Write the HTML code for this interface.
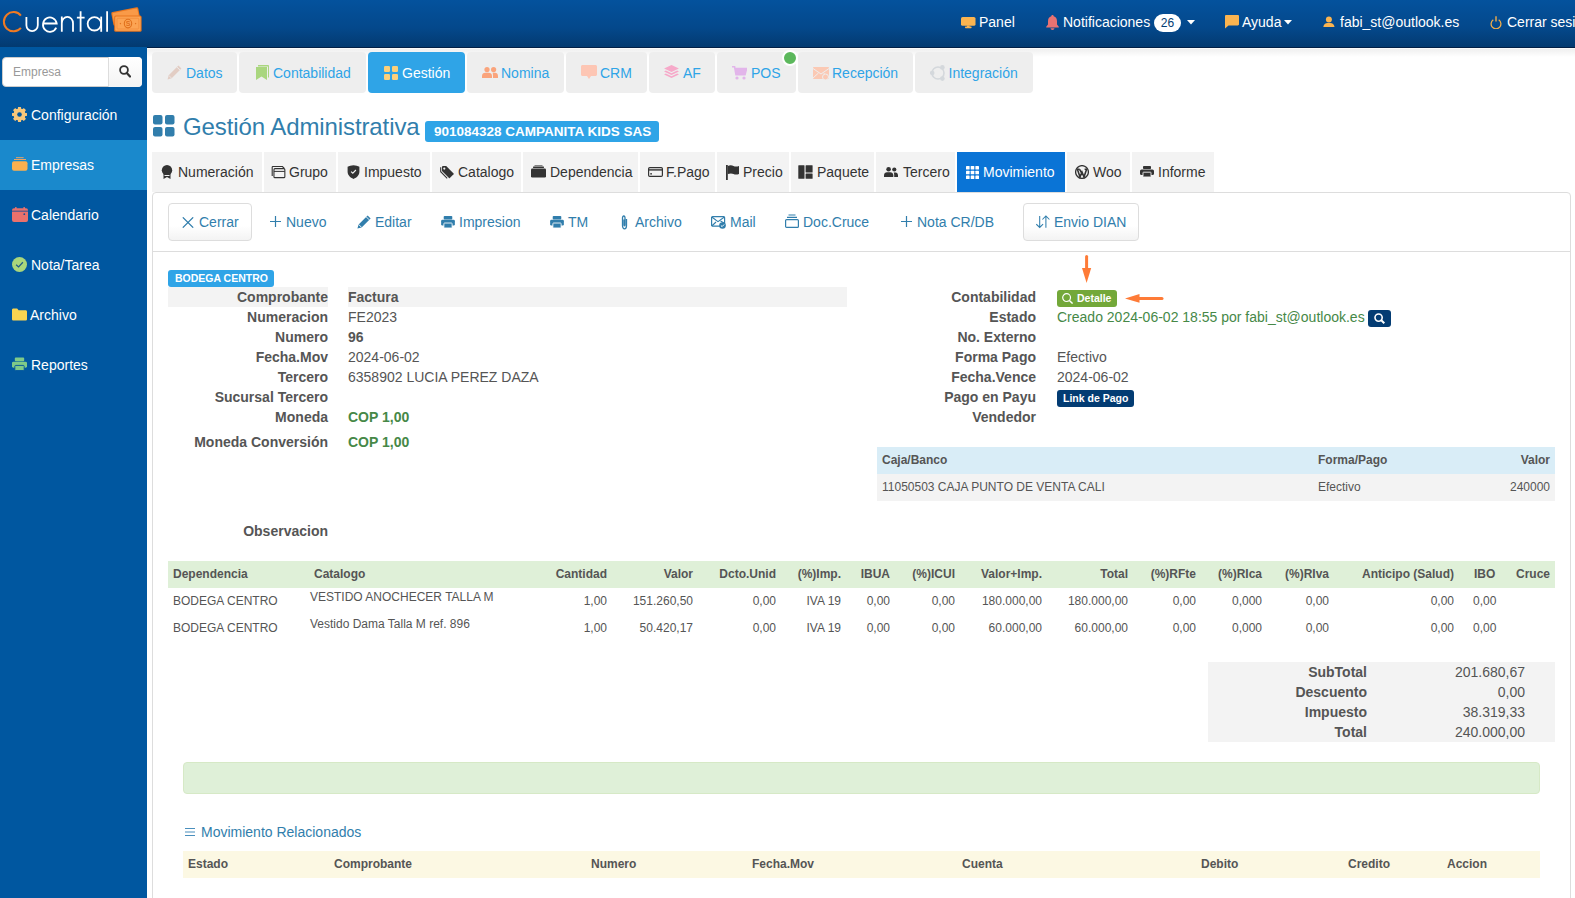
<!DOCTYPE html>
<html><head><meta charset="utf-8">
<style>
*{box-sizing:border-box;margin:0;padding:0}
html,body{width:1575px;height:898px;overflow:hidden;background:#fff;font-family:"Liberation Sans",sans-serif;font-size:14px;color:#555}
.a{position:absolute;white-space:nowrap}
#hdr{position:absolute;left:0;top:0;width:1575px;height:48px;background:linear-gradient(#04529d,#04488b 60%,#033a70);border-bottom:1px solid #021f45}
#hdr .t{position:absolute;white-space:nowrap;top:14px;color:#fff;font-size:14px;line-height:16px}
#side{position:absolute;left:0;top:47px;width:147px;height:851px;background:#0057a0;z-index:2}
.mi{position:absolute;left:0;width:147px;height:50px;color:#fff}
.mi span{position:absolute;white-space:nowrap;left:31px;top:17px;line-height:16px}
.mi svg{position:absolute;left:12px;top:17px}
.tab1{position:absolute;top:52px;height:41px;background:#eee;border-radius:4px;color:#2fa4e7}
.tab1 span{position:absolute;white-space:nowrap;top:13px;line-height:16px}
.tab1 svg{position:absolute;top:13px}
.tab2{position:absolute;top:152px;height:40px;background:#f3f3f3;color:#333}
.tab2 span{position:absolute;white-space:nowrap;top:12px;line-height:16px}
.tab2 svg{position:absolute;top:13px}
.tb{position:absolute;white-space:nowrap;top:214px;line-height:16px;color:#317eac}
.btn{position:absolute;top:203px;height:38px;border:1px solid #ddd;border-radius:4px;background:linear-gradient(#fff,#fff 60%,#f3f3f3)}
.lbl{position:absolute;white-space:nowrap;font-weight:bold;text-align:right;line-height:16px;color:#555}
.val{position:absolute;white-space:nowrap;line-height:16px;color:#555}
.th{position:absolute;white-space:nowrap;font-size:12px;font-weight:bold;line-height:14px;color:#555}
.td{position:absolute;white-space:nowrap;font-size:12px;line-height:14px;color:#555}
.r{text-align:right}
</style></head><body>

<!-- HEADER -->
<div id="hdr">
  <svg class="a" style="left:0;top:0" width="150" height="47" viewBox="0 0 150 47">
    <g fill="none" stroke-width="1.8" stroke-linecap="butt">
      <path d="M20.9,15.6 A9.6,9.6 0 1 0 20.9,27.8" stroke="#f07a22" stroke-width="2"/>
      <g stroke="#fff">
        <path d="M26.4,16.9 V25.3 A5.7,5.8 0 0 0 37.8,25.3 V16.9"/>
        <path d="M42.9,23.5 H56.7 A6.9,7.2 0 1 0 56.2,27.6"/>
        <path d="M61.8,16.6 V31.8 M61.8,23.2 A5.6,6.3 0 0 1 73,23.2 V31.8"/>
        <path d="M80.6,11.2 V31.8 M76.9,17.7 H84.6"/>
        <ellipse cx="94.4" cy="23.8" rx="6.75" ry="6.7"/>
        <path d="M101.2,16.6 V31.8"/>
        <path d="M107.1,11.2 V31.8"/>
      </g>
    </g>
    <g transform="rotate(-11 126 16)">
      <rect x="112" y="9.5" width="27.5" height="14" rx="1.5" fill="#e8761f"/>
      <rect x="113" y="10.5" width="25.5" height="12" rx="1" fill="#f99a48"/>
    </g>
    <rect x="114.2" y="15.5" width="27.4" height="16.3" rx="1.6" fill="#e8741e"/>
    <rect x="115.2" y="16.5" width="25.4" height="14.3" rx="1" fill="#fca453"/>
    <rect x="117" y="18.3" width="21.8" height="10.7" rx=".8" fill="none" stroke="#f08a38" stroke-width=".7"/>
    <ellipse cx="128" cy="23.6" rx="3.7" ry="4.3" fill="none" stroke="#e0701c" stroke-width="1.1"/>
    <text x="128" y="26.4" font-size="7" font-family="Liberation Sans" fill="#e0701c" text-anchor="middle" font-weight="bold">S</text>
    <path d="M119.6,23.6 l.8,-.8 .8,.8 -.8,.8z M134.8,23.6 l.8,-.8 .8,.8 -.8,.8z" fill="#e0701c"/>
  </svg>

  <!-- right nav -->
  <svg class="a" style="left:961px;top:17px" width="15" height="12" viewBox="0 0 15 12"><rect x="0" y="0" width="14.5" height="8.8" rx="1.6" fill="#fbb450"/><rect x="6" y="8.5" width="2.6" height="1.5" fill="#fbb450"/><rect x="4" y="9.6" width="6.6" height="1.6" rx=".7" fill="#fbb450"/></svg>
  <span class="t" style="left:979px">Panel</span>
  <svg class="a" style="left:1046px;top:14.5px" width="13" height="15" viewBox="0 0 13 15"><path d="M6.5,0 C7.3,0 7.7,.6 7.7,1.3 C10,1.9 11,3.8 11,6.2 V9.6 L12.8,11.8 V12.6 H0.2 V11.8 L2,9.6 V6.2 C2,3.8 3,1.9 5.3,1.3 C5.3,.6 5.7,0 6.5,0Z M4.6,13.3 H8.4 C8.4,14.3 7.6,15 6.5,15 C5.4,15 4.6,14.3 4.6,13.3Z" fill="#e87272"/></svg>
  <span class="t" style="left:1063px">Notificaciones</span>
  <div class="a" style="left:1154px;top:14px;width:27px;height:18px;border-radius:9px;background:#fff;color:#033c73;font-size:12px;line-height:19px;text-align:center">26</div>
  <svg class="a" style="left:1187px;top:20px" width="8" height="5" viewBox="0 0 8 5"><path d="M0,0 H8 L4,4.5Z" fill="#fff"/></svg>
  <svg class="a" style="left:1225px;top:15px" width="14" height="14" viewBox="0 0 14 14"><path d="M1.2,0 H12.8 C13.5,0 14,.5 14,1.2 V9.3 C14,10 13.5,10.5 12.8,10.5 H3.5 L0,13.5 V1.2 C0,.5 .5,0 1.2,0Z" fill="#fbb450"/></svg>
  <span class="t" style="left:1242px">Ayuda</span>
  <svg class="a" style="left:1284px;top:20px" width="8" height="5" viewBox="0 0 8 5"><path d="M0,0 H8 L4,4.5Z" fill="#fff"/></svg>
  <svg class="a" style="left:1323px;top:16px" width="12" height="12" viewBox="0 0 12 12"><circle cx="5.9" cy="3.4" r="3" fill="#fbb450"/><path d="M.3,11 C.6,8.6 2.4,7 4.5,7 H7.3 C9.4,7 11.2,8.6 11.5,11Z" fill="#fbb450"/></svg>
  <span class="t" style="left:1340px">fabi_st@outlook.es</span>
  <svg class="a" style="left:1490px;top:15.5px" width="12" height="13" viewBox="0 0 12 13"><path d="M3.3,3.8 A4.9,4.9 0 1 0 8.7,3.8" fill="none" stroke="#f2ae4a" stroke-width="1.3"/><path d="M6,.3 V5.6" stroke="#f2ae4a" stroke-width="1.4"/></svg>
  <span class="t" style="left:1507px">Cerrar sesión</span>
</div>

<div class="a" style="left:147px;top:48px;width:1428px;height:9px;background:linear-gradient(#fff,#f0f0f0 15%,#fff)"></div>
<!-- SIDEBAR -->
<div id="side">
  <div class="a" style="left:2px;top:10px;width:140px;height:30px;background:#fff;border-radius:4px;border:1px solid #ccc"></div>
  <span class="a" style="left:13px;top:18px;font-size:12px;color:#999;line-height:14px">Empresa</span>
  <div class="a" style="left:108px;top:10px;width:34px;height:30px;border-left:1px solid #ddd;border-radius:0 4px 4px 0;background:linear-gradient(#fff,#f3f3f3)"></div>
  <svg class="a" style="left:119px;top:18px" width="12" height="13" viewBox="0 0 12 13"><circle cx="5" cy="5" r="3.9" fill="none" stroke="#333" stroke-width="1.8"/><path d="M7.8,8 L11,11.5" stroke="#333" stroke-width="2.2" stroke-linecap="round"/></svg>

  <div class="mi" style="top:43px"><svg width="15" height="15" viewBox="0 0 15 15"><g fill="#f9c77a"><rect x="5.9" y="0" width="3.2" height="15" rx="1" transform="rotate(0 7.5 7.5)"/><rect x="5.9" y="0" width="3.2" height="15" rx="1" transform="rotate(45 7.5 7.5)"/><rect x="5.9" y="0" width="3.2" height="15" rx="1" transform="rotate(90 7.5 7.5)"/><rect x="5.9" y="0" width="3.2" height="15" rx="1" transform="rotate(135 7.5 7.5)"/><rect x="5.9" y="0" width="3.2" height="15" rx="1" transform="rotate(180 7.5 7.5)"/><rect x="5.9" y="0" width="3.2" height="15" rx="1" transform="rotate(225 7.5 7.5)"/><rect x="5.9" y="0" width="3.2" height="15" rx="1" transform="rotate(270 7.5 7.5)"/><rect x="5.9" y="0" width="3.2" height="15" rx="1" transform="rotate(315 7.5 7.5)"/><circle cx="7.5" cy="7.5" r="6"/></g><circle cx="7.5" cy="7.5" r="2.3" fill="#0057a0"/></svg><span>Configuración</span></div>
  <div class="mi" style="top:93px;background:#1a89cc"><svg width="16" height="14" viewBox="0 0 16 14"><rect x="4" y=".2" width="7.6" height="1" fill="#e9a568"/><rect x="2" y="2" width="12" height="1" fill="#e9a568"/><rect x="0" y="4.2" width="15.5" height="9.6" rx="2" fill="#fdb04e"/></svg><span>Empresas</span></div>
  <div class="mi" style="top:143px"><svg width="16" height="15" viewBox="0 0 16 15"><rect x="0" y="1.2" width="16" height="13.8" rx="2" fill="#ea716c"/><rect x="3" y="0" width="1.6" height="2.5" rx=".6" fill="#ea716c"/><rect x="11.4" y="0" width="1.6" height="2.5" rx=".6" fill="#ea716c"/><rect x="0" y="3.7" width="16" height=".9" fill="#1d4f95"/><circle cx="12.3" cy="7.2" r=".9" fill="#1d4f95"/></svg><span>Calendario</span></div>
  <div class="mi" style="top:193px"><svg width="15" height="15" viewBox="0 0 16 16"><circle cx="8" cy="8" r="8" fill="#a9d67b"/><path d="M4.4,8.2 L7,10.6 L11.6,5.6" fill="none" stroke="#1f5a8a" stroke-width="1.3"/></svg><span>Nota/Tarea</span></div>
  <div class="mi" style="top:243px"><svg style="top:18px" width="15" height="13" viewBox="0 0 16 13"><path d="M0,1.5 C0,.7 .7,0 1.5,0 H5.5 L7,2 H14.5 C15.3,2 16,2.7 16,3.5 V11.5 C16,12.3 15.3,13 14.5,13 H1.5 C.7,13 0,12.3 0,11.5Z" fill="#f9d450"/></svg><span style="left:30px">Archivo</span></div>
  <div class="mi" style="top:293px"><svg width="15" height="14" viewBox="0 0 16 14"><rect x="3" y="0" width="10" height="4" rx="1" fill="#7fca88"/><rect x="0" y="4.5" width="16" height="6.5" rx="1.5" fill="#7fca88"/><rect x="3" y="8.5" width="10" height="5.5" rx="1" fill="#7fca88" stroke="#03559f" stroke-width="1"/></svg><span>Reportes</span></div>
</div>

<!-- TOP TABS -->
<div class="tab1" style="left:152px;width:85px"><svg style="left:15px;top:13px" width="15" height="15" viewBox="0 0 16 16"><path d="M12.2,.6 L15.4,3.8 L5,14.2 L.6,15.4 L1.8,11Z" fill="#e2cdc4"/><path d="M10.6,2.2 L13.8,5.4" stroke="#eee" stroke-width="1"/><path d="M1.8,11 L5,14.2" stroke="#eee" stroke-width=".8"/></svg><span style="left:34px">Datos</span></div>
<div class="tab1" style="left:239px;width:127px"><svg style="left:17px;top:13px" width="13" height="15" viewBox="0 0 13 15"><path d="M2,0 H12 C12.5,0 13,.5 13,1 V13 L12,12 V1.5 H2Z" fill="#a9d67e"/><path d="M0,2 H11 V15 L5.5,11.5 L0,15Z" fill="#a9d67e"/></svg><span style="left:34px">Contabilidad</span></div>
<div class="tab1" style="left:368px;width:97px;background:#2fa4e7;color:#fff"><svg style="left:16px;top:14px" width="14" height="14" viewBox="0 0 14 14"><rect x="0" y="0" width="6" height="6" rx="1.2" fill="#fdd07a"/><rect x="8" y="0" width="6" height="6" rx="1.2" fill="#fdd07a"/><rect x="0" y="8" width="6" height="6" rx="1.2" fill="#fdd07a"/><rect x="8" y="8" width="6" height="6" rx="1.2" fill="#fdd07a"/></svg><span style="left:34px">Gestión</span></div>
<div class="tab1" style="left:467px;width:97px"><svg style="left:15px;top:15px" width="16" height="11" viewBox="0 0 16 11"><circle cx="5" cy="2.6" r="2.6" fill="#faa47c"/><circle cx="11.6" cy="2.6" r="2.6" fill="#faa47c"/><path d="M0,11 V9 C0,7 1.5,5.8 3.2,5.8 H6.8 C8.5,5.8 10,7 10,9 V11Z" fill="#faa47c"/><path d="M10.6,5.8 H13 C14.7,5.8 16,7 16,9 V11 H11 V9 C11,7.5 10.8,6.5 10.6,5.8Z" fill="#faa47c"/></svg><span style="left:34px">Nomina</span></div>
<div class="tab1" style="left:566px;width:81px"><svg style="left:15px;top:13px" width="16" height="14" viewBox="0 0 16 14"><path d="M1.5,0 H14.5 C15.3,0 16,.7 16,1.5 V9.5 C16,10.3 15.3,11 14.5,11 H10 L8,14 L6,11 H1.5 C.7,11 0,10.3 0,9.5 V1.5 C0,.7 .7,0 1.5,0Z" fill="#fdc6b4"/></svg><span style="left:34px">CRM</span></div>
<div class="tab1" style="left:649px;width:66px"><svg style="left:15px;top:13px" width="15" height="14" viewBox="0 0 16 15"><path d="M8,0 L16,3.8 L8,7.6 L0,3.8Z" fill="#f6a9c9"/><path d="M2,6 L8,8.9 L14,6 L16,7 L8,10.8 L0,7Z" fill="#f6a9c9"/><path d="M2,9.2 L8,12.1 L14,9.2 L16,10.2 L8,14 L0,10.2Z" fill="#f6a9c9"/></svg><span style="left:34px">AF</span></div>
<div class="tab1" style="left:717px;width:79px"><svg style="left:15px;top:14px" width="15" height="14" viewBox="0 0 15 14"><path d="M0,.8 H2.6 L4,8.8 H13 L14.6,2.6 H3.2" fill="none" stroke="#e2b5ea" stroke-width="1.6"/><path d="M3.4,3 H14.6 L13,8.8 H4.2Z" fill="#e2b5ea"/><circle cx="5" cy="12" r="1.6" fill="#e2b5ea"/><circle cx="12" cy="12" r="1.6" fill="#e2b5ea"/></svg><span style="left:34px">POS</span></div>
<div class="a" style="left:782px;top:50px;width:16px;height:16px;border-radius:50%;background:#5cb85c;border:2px solid #fff"></div>
<div class="tab1" style="left:798px;width:115px"><svg style="left:15px;top:15px" width="16" height="13" viewBox="0 0 16 13"><path d="M1,0 H15 C15.6,0 16,.4 16,1 V11 C16,11.6 15.6,12 15,12 H1 C.4,12 0,11.6 0,11 V1 C0,.4 .4,0 1,0Z" fill="#fbc9b4"/><path d="M0,1.5 L8,7 L16,1.5 M0,11 L5.5,6 M16,11 L10.5,6" fill="none" stroke="#eee" stroke-width="1"/><circle cx="12.5" cy="10" r="3" fill="#fbc9b4" stroke="#eee" stroke-width="1"/></svg><span style="left:34px">Recepción</span></div>
<div class="tab1" style="left:915px;width:118px"><svg style="left:15px;top:13px" width="16" height="16" viewBox="0 0 16 16"><circle cx="8" cy="8" r="6" fill="none" stroke="#d4d8dc" stroke-width="1.6"/><circle cx="12.4" cy="2.4" r="2.3" fill="#d4d8dc"/><circle cx="2.2" cy="8" r="2.3" fill="#d4d8dc"/><circle cx="12.4" cy="13.6" r="2.3" fill="#d4d8dc"/></svg><span style="left:33.5px">Integración</span></div>

<!-- HEADING -->
<svg class="a" style="left:153px;top:115px" width="22" height="22" viewBox="0 0 22 22"><rect x="0" y="0" width="9.5" height="9.5" rx="2" fill="#317eac"/><rect x="12" y="0" width="9.5" height="9.5" rx="2" fill="#317eac"/><rect x="0" y="12" width="9.5" height="9.5" rx="2" fill="#317eac"/><rect x="12" y="12" width="9.5" height="9.5" rx="2" fill="#317eac"/></svg>
<span class="a" style="left:183px;top:114px;font-size:24px;line-height:26px;color:#317eac;letter-spacing:-0.1px">Gestión Administrativa</span>
<div class="a" style="left:425px;top:121px;width:234px;height:21px;border-radius:3px;background:#2fa4e7;color:#fff;font-weight:bold;font-size:13.5px;line-height:21px;padding-left:9px">901084328 CAMPANITA KIDS SAS</div>

<!-- SECOND TABS -->
<div class="tab2" style="left:152px;width:110px"><svg style="left:9px;top:13px" width="12" height="14" viewBox="0 0 12 14"><circle cx="6" cy="5.2" r="5.2" fill="#333"/><path d="M2.5,9 L2.5,14 L6,12 L9.5,14 L9.5,9Z" fill="#333"/><path d="M3.5,10.5 H8.5" stroke="#f3f3f3" stroke-width="1"/></svg><span style="left:26px">Numeración</span></div>
<div class="tab2" style="left:264px;width:72px"><svg style="left:7px;top:14px" width="15" height="13" viewBox="0 0 15 13"><path d="M1.2,10 V1.2 Q1.2,.5 1.9,.5 H11.4 L13.3,2.3" fill="none" stroke="#333" stroke-width="1.1"/><rect x="2.95" y="2.65" width="10.9" height="9" rx="1" fill="none" stroke="#333" stroke-width="1.1"/><path d="M2.9,5.4 H13.8" stroke="#333" stroke-width="1"/></svg><span style="left:25px">Grupo</span></div>
<div class="tab2" style="left:338px;width:92px"><svg style="left:8.5px;top:13px" width="13" height="15" viewBox="0 0 13 15"><path d="M6.5,.2 C8.6,.4 10.9,.9 12.4,1.7 V6.6 C12.4,10.1 10,12.7 6.5,14 C3,12.7 .6,10.1 .6,6.6 V1.7 C2.1,.9 4.4,.4 6.5,.2Z" fill="#333"/><path d="M4.1,6.6 L5.8,8.2 L8.9,5" fill="none" stroke="#f3f3f3" stroke-width="1.1"/></svg><span style="left:26px">Impuesto</span></div>
<div class="tab2" style="left:432px;width:89px"><svg style="left:8px;top:14px" width="15" height="14" viewBox="0 0 15 14"><path d="M2,1 Q2,0 3,0 H6.2 L13.6,7.4 Q14,7.8 13.6,8.2 L9.8,12 Q9.4,12.4 9,12 L2,5Z" fill="#333"/><circle cx="4.3" cy="2.6" r="1.1" fill="#f3f3f3"/><path d="M.7,1.3 V5.7 L7.2,12.4" fill="none" stroke="#333" stroke-width="1.1"/></svg><span style="left:26px">Catalogo</span></div>
<div class="tab2" style="left:523px;width:115px"><svg style="left:8px;top:13px" width="15" height="13" viewBox="0 0 15 13"><rect x="3.5" y=".1" width="8" height="1" fill="#777"/><rect x="2" y="1.6" width="11" height="1.3" rx=".4" fill="#333"/><rect x="0" y="3.5" width="15" height="9" rx="1.3" fill="#333"/></svg><span style="left:27px">Dependencia</span></div>
<div class="tab2" style="left:640px;width:75px"><svg style="left:8px;top:15px" width="15" height="10" viewBox="0 0 15 10"><rect x=".6" y=".6" width="13.8" height="8.8" rx="1.2" fill="none" stroke="#333" stroke-width="1.2"/><rect x=".5" y="2.2" width="14" height="1.4" fill="#333"/><rect x="2.2" y="6.2" width="1.8" height="1.3" fill="#333"/></svg><span style="left:26px">F.Pago</span></div>
<div class="tab2" style="left:717px;width:72px"><svg style="left:9px;top:13px" width="13" height="15" viewBox="0 0 13 15"><rect x="0" y="0" width="1.8" height="15" fill="#333"/><path d="M1.8,1 C4,0 6,.3 7.5,1 C9,1.7 11,1.7 13,1 V9 C11,9.7 9,9.7 7.5,9 C6,8.3 4,8.3 1.8,9Z" fill="#333"/></svg><span style="left:26px">Precio</span></div>
<div class="tab2" style="left:791px;width:83px"><svg style="left:7px;top:13px" width="15" height="14" viewBox="0 0 15 14"><rect x=".3" y=".3" width="6.2" height="13.4" rx=".5" fill="#333"/><rect x="7.6" y=".3" width="7" height="7.2" rx=".5" fill="#333"/><rect x="7.6" y="8.4" width="7" height="5.3" rx=".5" fill="#333"/></svg><span style="left:26px">Paquete</span></div>
<div class="tab2" style="left:876px;width:79px"><svg style="left:8px;top:15px" width="14" height="10" viewBox="0 0 14 10"><circle cx="4.6" cy="2.3" r="2.3" fill="#333"/><circle cx="10.3" cy="2.5" r="2.1" fill="#333"/><path d="M0,10 V8.2 C0,6.4 1.4,5.3 3,5.3 H6.3 C7.9,5.3 9.3,6.4 9.3,8.2 V10Z" fill="#333"/><path d="M9.7,5.4 H11.6 C13,5.4 14,6.5 14,8.2 V10 H10.2 V8.2 C10.2,7 10.1,6.1 9.7,5.4Z" fill="#333"/></svg><span style="left:27px">Tercero</span></div>
<div class="tab2" style="left:957px;width:108px;background:#0a74d6;color:#fff"><svg style="left:9px;top:14px" width="13" height="13" viewBox="0 0 13 13"><g fill="#fff"><rect x="0" y="0" width="3.6" height="3.6" rx=".6"/><rect x="4.7" y="0" width="3.6" height="3.6" rx=".6"/><rect x="9.4" y="0" width="3.6" height="3.6" rx=".6"/><rect x="0" y="4.7" width="3.6" height="3.6" rx=".6"/><rect x="4.7" y="4.7" width="3.6" height="3.6" rx=".6"/><rect x="9.4" y="4.7" width="3.6" height="3.6" rx=".6"/><rect x="0" y="9.4" width="3.6" height="3.6" rx=".6"/><rect x="4.7" y="9.4" width="3.6" height="3.6" rx=".6"/><rect x="9.4" y="9.4" width="3.6" height="3.6" rx=".6"/></g></svg><span style="left:26px">Movimiento</span></div>
<div class="tab2" style="left:1067px;width:63px"><svg style="left:8px;top:13px" width="14" height="14" viewBox="0 0 14 14"><circle cx="7" cy="7" r="6.4" fill="#f3f3f3" stroke="#333" stroke-width="1.3"/><path d="M2.4,4.3 L5,12 L7,7.2 L9,12 L11.6,4.3 M1.8,4.3 H4.6 M9.6,4.3 H12.2 M4.6,4.3 L7,8.6" fill="none" stroke="#333" stroke-width="1.6"/></svg><span style="left:26px">Woo</span></div>
<div class="tab2" style="left:1132px;width:82px"><svg style="left:8px;top:14px" width="14" height="11" viewBox="0 0 14 11"><rect x="3" y="0" width="8" height="3" rx=".8" fill="#333"/><rect x="0" y="3.5" width="14" height="5.5" rx="1.5" fill="#333"/><rect x="3" y="6.2" width="8" height="4.8" rx=".6" fill="#333" stroke="#f3f3f3" stroke-width=".9"/></svg><span style="left:26px">Informe</span></div>

<!-- PANEL -->
<div class="a" style="left:152px;top:192px;width:1419px;height:720px;border:1px solid #ddd;border-radius:4px;background:#fff"></div>
<div class="a" style="left:153px;top:251px;width:1417px;height:1px;background:#ddd"></div>

<!-- TOOLBAR -->
<div class="btn" style="left:168px;width:84px"></div>
<svg class="a" style="left:182px;top:217px" width="12" height="11" viewBox="0 0 12 11"><path d="M.8,.4 L11.2,10.6 M11.2,.4 L.8,10.6" stroke="#317eac" stroke-width="1.3"/></svg>
<span class="tb" style="left:199px">Cerrar</span>
<svg class="a" style="left:270px;top:216px" width="11" height="11" viewBox="0 0 11 11"><path d="M5.5,0 V11 M0,5.5 H11" stroke="#317eac" stroke-width="1.2"/></svg>
<span class="tb" style="left:286px">Nuevo</span>
<svg class="a" style="left:357px;top:215px" width="14" height="14" viewBox="0 0 14 14"><path d="M10.6,.4 L13.6,3.4 L4.6,12.4 L.4,13.6 L1.6,9.4Z" fill="#317eac"/><path d="M9.2,1.8 L12.2,4.8 M1.6,9.4 L4.6,12.4" stroke="#fff" stroke-width=".9"/></svg>
<span class="tb" style="left:375px">Editar</span>
<svg class="a" style="left:441px;top:216px" width="14" height="12" viewBox="0 0 16 14"><rect x="3" y="0" width="10" height="4" rx="1" fill="#317eac"/><rect x="0" y="4.5" width="16" height="6.5" rx="1.5" fill="#317eac"/><rect x="3.2" y="8.2" width="9.6" height="5.8" rx=".8" fill="#317eac" stroke="#fff" stroke-width="1"/></svg>
<span class="tb" style="left:459px">Impresion</span>
<svg class="a" style="left:550px;top:216px" width="14" height="12" viewBox="0 0 16 14"><rect x="3" y="0" width="10" height="4" rx="1" fill="#317eac"/><rect x="0" y="4.5" width="16" height="6.5" rx="1.5" fill="#317eac"/><rect x="3.2" y="8.2" width="9.6" height="5.8" rx=".8" fill="#317eac" stroke="#fff" stroke-width="1"/></svg>
<span class="tb" style="left:568px">TM</span>
<svg class="a" style="left:620px;top:215px" width="9" height="15" viewBox="0 0 9 15"><path d="M6.5,4 V10.5 C6.5,12.4 5.6,13.8 4.5,13.8 C3.4,13.8 2.5,12.4 2.5,10.5 V3 C2.5,1.8 3,1 3.8,1 C4.6,1 5,1.8 5,3 V10 C5,10.5 4.8,10.8 4.5,10.8 C4.2,10.8 4,10.5 4,10 V4.5" fill="none" stroke="#317eac" stroke-width="1.3"/></svg>
<span class="tb" style="left:635px">Archivo</span>
<svg class="a" style="left:711px;top:215px" width="15" height="14" viewBox="0 0 15 14"><rect x=".6" y="1.6" width="13" height="9.6" rx="1" fill="none" stroke="#317eac" stroke-width="1.2"/><path d="M.8,2 L7,6.6 L13.4,2 M.8,11 L5,7 M13,8 L9.5,6" fill="none" stroke="#317eac" stroke-width="1.1"/><circle cx="11.5" cy="10.5" r="3.3" fill="#317eac"/><path d="M9.9,10.5 L11.1,11.6 L13.1,9.5" fill="none" stroke="#fff" stroke-width="1"/></svg>
<span class="tb" style="left:730px">Mail</span>
<svg class="a" style="left:785px;top:214px" width="14" height="14" viewBox="0 0 14 14"><rect x=".6" y="5.6" width="12.8" height="7.8" rx="1" fill="none" stroke="#317eac" stroke-width="1.2"/><path d="M2,3.4 H12 M3.5,1 H10.5" stroke="#317eac" stroke-width="1.1"/></svg>
<span class="tb" style="left:803px">Doc.Cruce</span>
<svg class="a" style="left:901px;top:216px" width="11" height="11" viewBox="0 0 11 11"><path d="M5.5,0 V11 M0,5.5 H11" stroke="#317eac" stroke-width="1.2"/></svg>
<span class="tb" style="left:917px">Nota CR/DB</span>
<div class="btn" style="left:1023px;width:116px"></div>
<svg class="a" style="left:1036px;top:215px" width="14" height="14" viewBox="0 0 14 14"><path d="M3.7,1 V12.5 M.3,9.2 L3.7,12.5 L7.1,9.2 M9.9,12.8 V1.2 M6.4,4.5 L9.9,1 L13.4,4.5" fill="none" stroke="#317eac" stroke-width="1.05"/></svg>
<span class="tb" style="left:1054px">Envio DIAN</span>

<!-- LEFT FORM -->
<div class="a" style="left:168px;top:270px;width:106px;height:17px;border-radius:3px;background:#2fa4e7;color:#fff;font-weight:bold;font-size:10.5px;line-height:17px;padding-left:7px">BODEGA CENTRO</div>
<div class="a" style="left:168px;top:287px;width:160px;height:20px;background:#f3f3f3"></div>
<div class="a" style="left:348px;top:287px;width:499px;height:20px;background:#f3f3f3"></div>
<div class="lbl" style="left:100px;width:228px;top:287px;line-height:20px">Comprobante</div>
<div class="val" style="left:348px;top:287px;line-height:20px;font-weight:bold">Factura</div>
<div class="lbl" style="left:100px;width:228px;top:307px;line-height:20px">Numeracion</div>
<div class="val" style="left:348px;top:307px;line-height:20px">FE2023</div>
<div class="lbl" style="left:100px;width:228px;top:327px;line-height:20px">Numero</div>
<div class="val" style="left:348px;top:327px;line-height:20px;font-weight:bold">96</div>
<div class="lbl" style="left:100px;width:228px;top:347px;line-height:20px">Fecha.Mov</div>
<div class="val" style="left:348px;top:347px;line-height:20px">2024-06-02</div>
<div class="lbl" style="left:100px;width:228px;top:367px;line-height:20px">Tercero</div>
<div class="val" style="left:348px;top:367px;line-height:20px">6358902 LUCIA PEREZ DAZA</div>
<div class="lbl" style="left:100px;width:228px;top:387px;line-height:20px">Sucursal Tercero</div>
<div class="lbl" style="left:100px;width:228px;top:407px;line-height:20px">Moneda</div>
<div class="val" style="left:348px;top:407px;line-height:20px;font-weight:bold;color:#468847">COP 1,00</div>
<div class="lbl" style="left:100px;width:228px;top:432px;line-height:20px">Moneda Conversión</div>
<div class="val" style="left:348px;top:432px;line-height:20px;font-weight:bold;color:#468847">COP 1,00</div>
<div class="lbl" style="left:100px;width:228px;top:521px;line-height:20px">Observacion</div>

<!-- RIGHT FORM -->
<div class="lbl" style="left:800px;width:236px;top:287px;line-height:20px">Contabilidad</div>
<div class="a" style="left:1057px;top:290px;width:60px;height:17px;border-radius:3px;background:#73a839"></div>
<svg class="a" style="left:1062px;top:293px" width="12" height="11" viewBox="0 0 12 11"><circle cx="4.6" cy="4.6" r="3.9" fill="none" stroke="#fff" stroke-width="1.2"/><path d="M7.4,7.4 L10.6,10.6" stroke="#fff" stroke-width="1.4"/></svg>
<span class="a" style="left:1077px;top:290px;color:#fff;font-weight:bold;font-size:10.5px;line-height:17px">Detalle</span>
<svg class="a" style="left:1080px;top:254px" width="90" height="52" viewBox="0 0 90 52"><path d="M6.6,2.5 V16" stroke="#fe7b37" stroke-width="3" stroke-linecap="round"/><path d="M2,14 H11.2 L6.6,29Z" fill="#fe7b37"/><path d="M57,44.4 H82" stroke="#fe7b37" stroke-width="3" stroke-linecap="round"/><path d="M45,44.4 L59.5,40 V48.8Z" fill="#fe7b37"/></svg>
<div class="lbl" style="left:800px;width:236px;top:307px;line-height:20px">Estado</div>
<div class="val" style="left:1057px;top:307px;line-height:20px;color:#468847">Creado 2024-06-02 18:55 por fabi_st@outlook.es</div>
<div class="a" style="left:1368px;top:310px;width:23px;height:17px;border-radius:3px;background:#033c73"></div>
<svg class="a" style="left:1374px;top:313px" width="12" height="11" viewBox="0 0 12 11"><circle cx="4.6" cy="4.6" r="3.6" fill="none" stroke="#fff" stroke-width="1.6"/><path d="M7.3,7.3 L10.3,10.3" stroke="#fff" stroke-width="2"/></svg>
<div class="lbl" style="left:800px;width:236px;top:327px;line-height:20px">No. Externo</div>
<div class="lbl" style="left:800px;width:236px;top:347px;line-height:20px">Forma Pago</div>
<div class="val" style="left:1057px;top:347px;line-height:20px">Efectivo</div>
<div class="lbl" style="left:800px;width:236px;top:367px;line-height:20px">Fecha.Vence</div>
<div class="val" style="left:1057px;top:367px;line-height:20px">2024-06-02</div>
<div class="lbl" style="left:800px;width:236px;top:387px;line-height:20px">Pago en Payu</div>
<div class="a" style="left:1057px;top:390px;width:77px;height:17px;border-radius:3px;background:#033c73;color:#fff;font-weight:bold;font-size:10.5px;line-height:17px;padding-left:6px">Link de Pago</div>
<div class="lbl" style="left:800px;width:236px;top:407px;line-height:20px">Vendedor</div>

<!-- CAJA TABLE -->
<div class="a" style="left:877px;top:447px;width:678px;height:27px;background:#d9edf7"></div>
<div class="a" style="left:877px;top:474px;width:678px;height:27px;background:#f3f3f3"></div>
<div class="th" style="left:882px;top:453px">Caja/Banco</div>
<div class="th" style="left:1318px;top:453px">Forma/Pago</div>
<div class="th r" style="left:1450px;width:100px;top:453px">Valor</div>
<div class="td" style="left:882px;top:480px">11050503 CAJA PUNTO DE VENTA CALI</div>
<div class="td" style="left:1318px;top:480px">Efectivo</div>
<div class="td r" style="left:1450px;width:100px;top:480px">240000</div>

<!-- PRODUCTS TABLE -->
<div class="a" style="left:168px;top:561px;width:1387px;height:27px;background:#dff0d8"></div>
<div class="th" style="left:173px;top:567px">Dependencia</div>
<div class="th" style="left:314px;top:567px">Catalogo</div>
<div class="th r" style="left:507px;width:100px;top:567px">Cantidad</div>
<div class="th r" style="left:593px;width:100px;top:567px">Valor</div>
<div class="th r" style="left:676px;width:100px;top:567px">Dcto.Unid</div>
<div class="th r" style="left:741px;width:100px;top:567px">(%)Imp.</div>
<div class="th r" style="left:790px;width:100px;top:567px">IBUA</div>
<div class="th r" style="left:855px;width:100px;top:567px">(%)ICUI</div>
<div class="th r" style="left:942px;width:100px;top:567px">Valor+Imp.</div>
<div class="th r" style="left:1028px;width:100px;top:567px">Total</div>
<div class="th r" style="left:1096px;width:100px;top:567px">(%)RFte</div>
<div class="th r" style="left:1162px;width:100px;top:567px">(%)RIca</div>
<div class="th r" style="left:1229px;width:100px;top:567px">(%)RIva</div>
<div class="th r" style="left:1354px;width:100px;top:567px">Anticipo (Salud)</div>
<div class="th" style="left:1474px;top:567px">IBO</div>
<div class="th r" style="left:1450px;width:100px;top:567px">Cruce</div>
<div class="td" style="left:173px;top:594px">BODEGA CENTRO</div>
<div class="td" style="left:310px;top:590px">VESTIDO ANOCHECER TALLA M</div>
<div class="td r" style="left:507px;width:100px;top:594px">1,00</div>
<div class="td r" style="left:593px;width:100px;top:594px">151.260,50</div>
<div class="td r" style="left:676px;width:100px;top:594px">0,00</div>
<div class="td r" style="left:741px;width:100px;top:594px">IVA 19</div>
<div class="td r" style="left:790px;width:100px;top:594px">0,00</div>
<div class="td r" style="left:855px;width:100px;top:594px">0,00</div>
<div class="td r" style="left:942px;width:100px;top:594px">180.000,00</div>
<div class="td r" style="left:1028px;width:100px;top:594px">180.000,00</div>
<div class="td r" style="left:1096px;width:100px;top:594px">0,00</div>
<div class="td r" style="left:1162px;width:100px;top:594px">0,000</div>
<div class="td r" style="left:1229px;width:100px;top:594px">0,00</div>
<div class="td r" style="left:1354px;width:100px;top:594px">0,00</div>
<div class="td" style="left:1473px;top:594px">0,00</div>
<div class="td" style="left:173px;top:621px">BODEGA CENTRO</div>
<div class="td" style="left:310px;top:617px">Vestido Dama Talla M ref. 896</div>
<div class="td r" style="left:507px;width:100px;top:621px">1,00</div>
<div class="td r" style="left:593px;width:100px;top:621px">50.420,17</div>
<div class="td r" style="left:676px;width:100px;top:621px">0,00</div>
<div class="td r" style="left:741px;width:100px;top:621px">IVA 19</div>
<div class="td r" style="left:790px;width:100px;top:621px">0,00</div>
<div class="td r" style="left:855px;width:100px;top:621px">0,00</div>
<div class="td r" style="left:942px;width:100px;top:621px">60.000,00</div>
<div class="td r" style="left:1028px;width:100px;top:621px">60.000,00</div>
<div class="td r" style="left:1096px;width:100px;top:621px">0,00</div>
<div class="td r" style="left:1162px;width:100px;top:621px">0,000</div>
<div class="td r" style="left:1229px;width:100px;top:621px">0,00</div>
<div class="td r" style="left:1354px;width:100px;top:621px">0,00</div>
<div class="td" style="left:1473px;top:621px">0,00</div>

<!-- TOTALS -->
<div class="a" style="left:1208px;top:662px;width:347px;height:80px;background:#f3f3f3"></div>
<div class="lbl" style="left:1167px;width:200px;top:662px;line-height:20px">SubTotal</div>
<div class="val r" style="left:1325px;width:200px;top:662px;line-height:20px">201.680,67</div>
<div class="lbl" style="left:1167px;width:200px;top:682px;line-height:20px">Descuento</div>
<div class="val r" style="left:1325px;width:200px;top:682px;line-height:20px">0,00</div>
<div class="lbl" style="left:1167px;width:200px;top:702px;line-height:20px">Impuesto</div>
<div class="val r" style="left:1325px;width:200px;top:702px;line-height:20px">38.319,33</div>
<div class="lbl" style="left:1167px;width:200px;top:722px;line-height:20px">Total</div>
<div class="val r" style="left:1325px;width:200px;top:722px;line-height:20px">240.000,00</div>

<!-- ALERT -->
<div class="a" style="left:183px;top:762px;width:1357px;height:32px;background:#dff0d8;border:1px solid #d6e9c6;border-radius:4px"></div>

<!-- MOV RELACIONADOS -->
<svg class="a" style="left:185px;top:827px" width="10" height="10" viewBox="0 0 10 10"><path d="M0,1.5 H10 M0,5 H10 M0,8.5 H10" stroke="#4a8fbd" stroke-width="1"/></svg>
<span class="a" style="left:201px;top:824px;font-size:14px;line-height:16px;color:#317eac">Movimiento Relacionados</span>
<div class="a" style="left:183px;top:851px;width:1357px;height:27px;background:#fcf8e3"></div>
<div class="th" style="left:188px;top:857px">Estado</div>
<div class="th" style="left:334px;top:857px">Comprobante</div>
<div class="th" style="left:591px;top:857px">Numero</div>
<div class="th" style="left:752px;top:857px">Fecha.Mov</div>
<div class="th" style="left:962px;top:857px">Cuenta</div>
<div class="th" style="left:1201px;top:857px">Debito</div>
<div class="th" style="left:1348px;top:857px">Credito</div>
<div class="th" style="left:1447px;top:857px">Accion</div>

</body></html>
